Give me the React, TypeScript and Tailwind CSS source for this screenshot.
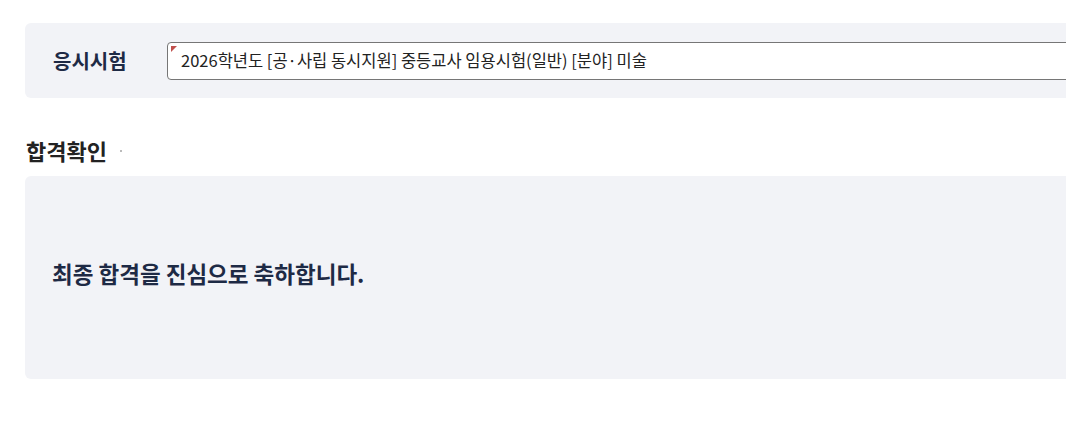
import React from "react";

export default function App() {
  return (
    <div
      className="w-[1066px] h-[445px] overflow-hidden bg-white"
      style={{ fontFamily: '"Noto Sans CJK KR", "Noto Sans", sans-serif' }}
    >
      <div className="pl-[25px] pt-[23px] w-[1200px]">
        <div className="flex items-center h-[75px] rounded-[6px] bg-[#f2f3f7] pl-[28px]">
          <div className="w-[114px] text-[20px] font-bold text-[#1e2a45] leading-none">응시시험</div>
          <div className="relative flex items-center h-[38px] flex-1 rounded-[4px] border border-[#767676] bg-white pl-[13px]">
            <span className="absolute left-[3px] top-[3px] w-0 h-0 border-t-[6px] border-r-[6px] border-t-[#c0504d] border-r-transparent" />
            <span className="text-[16.5px] text-[#222] leading-none">
              2026학년도 [공·사립 동시지원] 중등교사 임용시험(일반) [분야] 미술
            </span>
          </div>
        </div>
        <div className="relative h-[78px] pl-[1px]">
          <h2 className="absolute left-[1px] top-[41px] text-[22px] font-bold text-[#222] leading-none">합격확인</h2>
          <span className="absolute left-[95px] top-[52px] w-[2px] h-[2px] bg-[#bbb]" />
        </div>
        <div className="flex items-center h-[203px] rounded-[6px] bg-[#f2f3f7] pl-[27px] pb-[8px]">
          <p className="text-[22.5px] font-bold text-[#1e2a45] leading-none">최종 합격을 진심으로 축하합니다.</p>
        </div>
      </div>
    </div>
  );
}
